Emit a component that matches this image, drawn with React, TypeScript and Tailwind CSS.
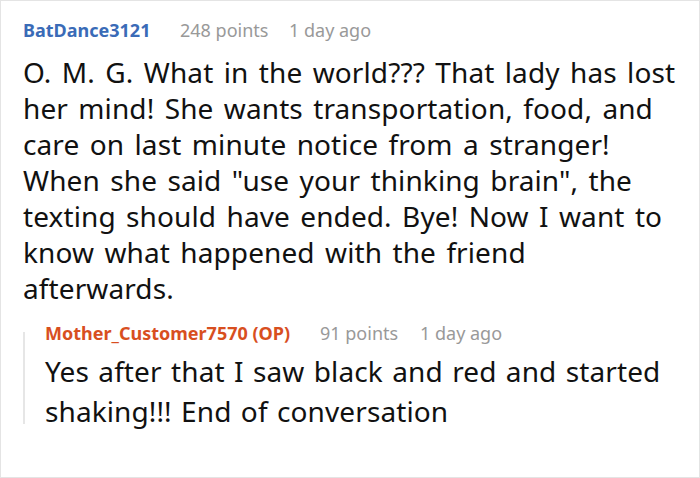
const comment = {
  author: "BatDance3121",
  points: "248 points",
  time: "1 day ago",
  lines: [
    "O. M. G. What in the world??? That lady has lost",
    "her mind! She wants transportation, food, and",
    "care on last minute notice from a stranger!",
    'When she said "use your thinking brain", the',
    "texting should have ended. Bye! Now I want to",
    "know what happened with the friend",
    "afterwards.",
  ],
};

const reply = {
  author: "Mother_Customer7570 (OP)",
  points: "91 points",
  time: "1 day ago",
  lines: ["Yes after that I saw black and red and started", "shaking!!! End of conversation"],
};

export default function App() {
  return (
    <div className="w-[700px] h-[478px] border border-[#e4e4e4] bg-white font-['Noto_Sans',sans-serif] overflow-hidden">
      <div className="pl-[22px] pr-3 pt-[17px]">
        <div className="flex items-center text-[18px] leading-[24px]">
          <span className="font-bold text-[#3a6bb7] w-[157px]">{comment.author}</span>
          <span className="text-[#999999] w-[109px]">{comment.points}</span>
          <span className="text-[#999999]">{comment.time}</span>
        </div>
        <p className="mt-3 text-[28px] leading-[36px] tracking-[0.1px] [word-spacing:3px] text-[#111111] whitespace-nowrap">
          {comment.lines.map((line, i) => (
            <span key={i} className="block">
              {line}
            </span>
          ))}
        </p>

        <div className="mt-[15px] flex">
          <div className="w-[2px] bg-[#e6e6e6] mt-[11px] mb-[7px]" />
          <div className="pl-5">
            <div className="flex items-center text-[18px] leading-[24px]">
              <span className="font-bold text-[#d84f1f] w-[275px]">{reply.author}</span>
              <span className="text-[#999999] w-[100px]">{reply.points}</span>
              <span className="text-[#999999]">{reply.time}</span>
            </div>
            <p className="mt-[6px] text-[28px] leading-[40px] tracking-[0.1px] [word-spacing:2px] text-[#111111] whitespace-nowrap">
              {reply.lines.map((line, i) => (
                <span key={i} className="block">
                  {line}
                </span>
              ))}
            </p>
          </div>
        </div>
      </div>
    </div>
  );
}
